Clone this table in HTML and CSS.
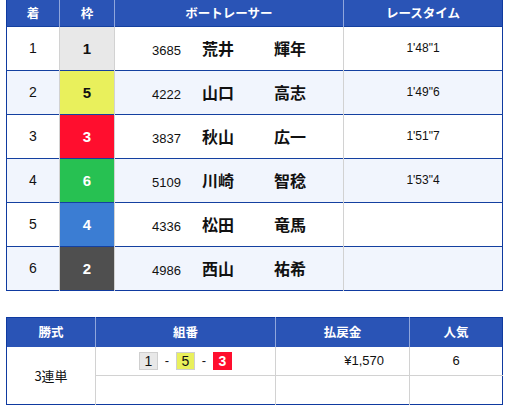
FILE: index.html
```html
<!DOCTYPE html>
<html lang="ja">
<head>
<meta charset="utf-8">
<link rel="stylesheet" href="styles.css">
</head>
<body>
<table class="result">
  <colgroup>
    <col class="c-rank"><col class="c-frame"><col class="c-racer"><col class="c-time">
  </colgroup>
  <thead>
    <tr><th>着</th><th>枠</th><th>ボートレーサー</th><th>レースタイム</th></tr>
  </thead>
  <tbody>
    <tr><td class="rank">1</td><td class="frame f1">1</td><td><div class="racer"><span class="num">3685</span><span class="sei">荒井</span><span class="mei">輝年</span></div></td><td class="time">1'48"1</td></tr>
    <tr class="alt"><td class="rank">2</td><td class="frame f5">5</td><td><div class="racer"><span class="num">4222</span><span class="sei">山口</span><span class="mei">高志</span></div></td><td class="time">1'49"6</td></tr>
    <tr><td class="rank">3</td><td class="frame f3">3</td><td><div class="racer"><span class="num">3837</span><span class="sei">秋山</span><span class="mei">広一</span></div></td><td class="time">1'51"7</td></tr>
    <tr class="alt"><td class="rank">4</td><td class="frame f6">6</td><td><div class="racer"><span class="num">5109</span><span class="sei">川崎</span><span class="mei">智稔</span></div></td><td class="time">1'53"4</td></tr>
    <tr><td class="rank">5</td><td class="frame f4">4</td><td><div class="racer"><span class="num">4336</span><span class="sei">松田</span><span class="mei">竜馬</span></div></td><td class="time"></td></tr>
    <tr class="alt"><td class="rank">6</td><td class="frame f2">2</td><td><div class="racer"><span class="num">4986</span><span class="sei">西山</span><span class="mei">祐希</span></div></td><td class="time"></td></tr>
  </tbody>
</table>

<table class="payout">
  <colgroup>
    <col class="p-kind"><col class="p-combo"><col class="p-money"><col class="p-pop">
  </colgroup>
  <thead>
    <tr><th>勝式</th><th>組番</th><th>払戻金</th><th>人気</th></tr>
  </thead>
  <tbody>
    <tr>
      <td class="kind" rowspan="2">3連単</td>
      <td class="combo"><span class="box b1">1</span><span class="dash">-</span><span class="box b5">5</span><span class="dash">-</span><span class="box b3">3</span></td>
      <td class="money">¥1,570</td>
      <td class="pop">6</td>
    </tr>
    <tr class="empty"><td></td><td></td><td></td></tr>
  </tbody>
</table>
</body>
</html>
```

FILE: styles.css
```css
html, body {
  margin: 0;
  padding: 0;
  background: #fff;
}
body {
  padding: 0 9px 0 6px;
  font-family: "Liberation Sans", "Noto Sans CJK JP", sans-serif;
  color: #111;
}
table {
  border-collapse: collapse;
  table-layout: fixed;
  width: 496px;
}
th {
  color: #fff;
  font-family: "Noto Sans CJK JP", sans-serif;
  font-weight: 700;
  font-size: 12.5px;
  background-color: #2450b0;
  background-image: repeating-conic-gradient(#1a43a6 0 25%, #3a66c6 0 50%);
  background-size: 2px 2px;
  border-left: 1px solid #8fa6dc;
  padding: 0;
  line-height: 1;
}
th:first-child { border-left: none; }

.result { border: 1px solid #0f3aa0; border-top: none; }
.result thead tr { height: 26px; }
.result th { border-top: none; }
.c-rank { width: 53px; }
.c-frame { width: 55px; }
.c-racer { width: 229px; }
.c-time { width: 159px; }

.result tbody tr { height: 44px; background: #fff; }
.result tbody tr.alt { background: #f1f5fd; }
.result td {
  padding: 0;
  height: 43px;
  text-align: center;
  border-top: 1px solid #1440a0;
  border-left: 1px solid #d2d2d2;
}
.result td:first-child { border-left: none; }
.rank { font-size: 14px; }
.frame {
  font-weight: 700;
  font-size: 15px;
  color: #fff;
}
.f1 { background: #e8e8e8; color: #111; }
.f5 { background: #e9f05c; color: #111; }
.f3 { background: #ff0e2e; }
.f6 { background: #27c152; }
.f4 { background: #3b7dd3; }
.f2 { background: #4f4f4f; }

.racer {
  display: flex;
  justify-content: center;
  align-items: baseline;
  white-space: nowrap;
  padding-left: 2px;
}
.num { font-size: 13px; width: 50px; flex-shrink: 0; text-align: left; }
.sei, .mei {
  font-family: "Noto Sans CJK JP", sans-serif;
  font-weight: 700;
  font-size: 16px;
  flex-shrink: 0;
}
.sei { width: 72px; text-align: left; }
.mei { width: 34px; text-align: left; }
.time { font-size: 12px; }

.payout {
  margin-top: 26px;
  border: 1px solid #0f3aa0;
}
.payout thead tr { height: 29px; }
.payout th { height: 29px; }
.p-kind { width: 89px; }
.p-combo { width: 180px; }
.p-money { width: 134px; }
.p-pop { width: 93px; }
.payout td {
  padding: 0;
  border-left: 1px solid #d2d2d2;
  border-top: 1px solid #d2d2d2;
  font-size: 13px;
  line-height: 1;
  text-align: center;
  height: 29px;
  box-sizing: border-box;
}
.payout tbody tr:first-child td { border-top: none; }
.kind { border-left: none !important; font-family: "Noto Sans CJK JP", sans-serif; font-size: 13px; }
.combo { white-space: nowrap; }
.box {
  display: inline-block;
  box-sizing: border-box;
  width: 19px;
  height: 18px;
  line-height: 16px;
  font-size: 14px;
  vertical-align: middle;
  border: 1px solid #cfcfcf;
  text-align: center;
}
.b1 { background: #e8e8e8; }
.b5 { background: #e9f05c; }
.b3 { background: #ff0e2e; color: #fff; font-weight: 700; border-color: #ff0e2e; }
.dash {
  display: inline-block;
  width: 18px;
  text-align: center;
  font-size: 13px;
  vertical-align: middle;
}
.money { text-align: right !important; padding-right: 25px !important; }
```
